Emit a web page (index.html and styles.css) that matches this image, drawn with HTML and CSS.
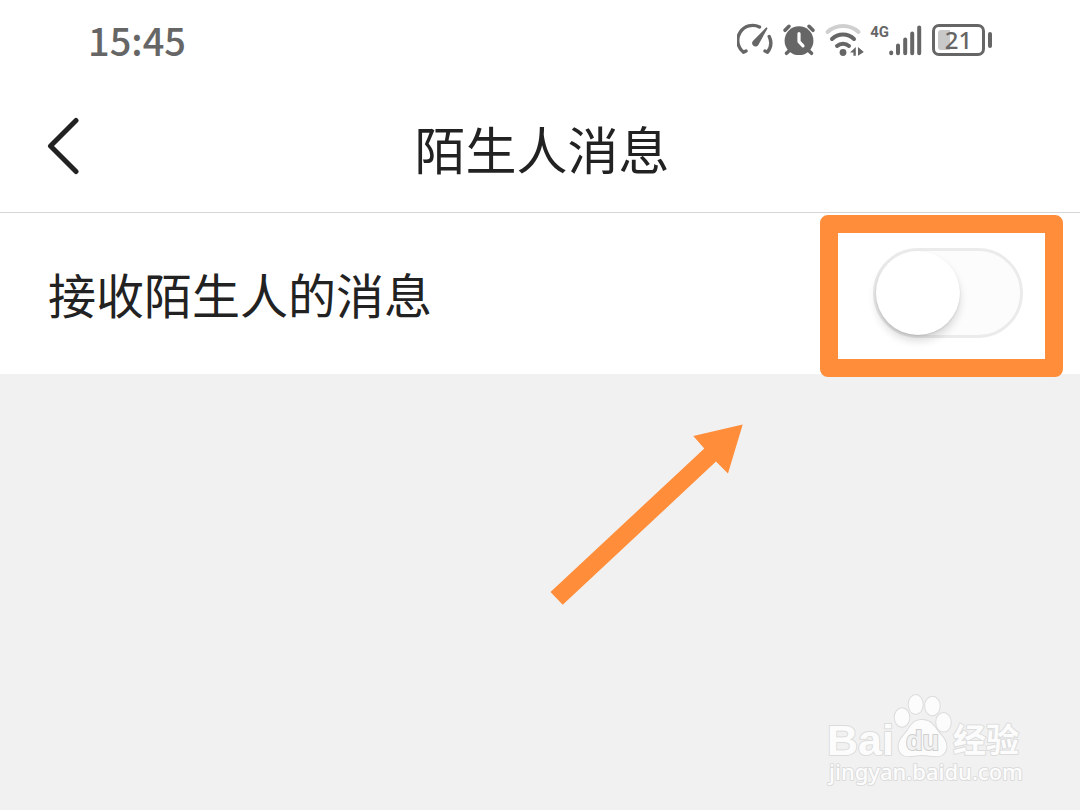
FILE: index.html
```
<!DOCTYPE html>
<html lang="zh-CN">
<head>
    <meta charset="UTF-8">
    <meta name="viewport" content="width=device-width, initial-scale=1.0">
    <title>陌生人消息</title>
    <link rel="stylesheet" href="styles.css">
</head>
<body>

    <div class="status-bar">
        <span class="time">15:45</span>
        <div class="status-icons">
            <!-- Speed gauge -->
            <svg class="icon" width="37" height="36" viewBox="0 0 37 36">
                <g fill="none" stroke="#666" stroke-width="3.4" stroke-linecap="round" stroke-linejoin="round">
                    <path d="M9 29L6.5 30.2A15 15 0 0 1 22.5 5"/>
                    <path d="M32.2 14.5A15 15 0 0 1 30.5 30.2L28 29"/>
                </g>
                <path d="M30.6 6.2L21.6 22.4A3.4 3.4 0 1 1 16.4 18.4L29.4 5.2Z" fill="#666"/>
            </svg>
            <!-- Alarm -->
            <svg class="icon" width="34" height="36" viewBox="0 0 34 36">
                <circle cx="17" cy="18.7" r="14.4" fill="#666"/>
                <g fill="none" stroke="#666" stroke-width="3.6" stroke-linecap="round">
                    <path d="M3 8.3L7 4.3M27 4.3L31 8.3M4.5 31.3L8 28M29.5 31.3L26 28"/>
                </g>
                <path d="M17 11.5V19.6L21 23.8" fill="none" stroke="#fff" stroke-width="3.2" stroke-linecap="round" stroke-linejoin="round"/>
            </svg>
            <!-- Wi-Fi -->
            <svg class="icon" width="40" height="36" viewBox="0 0 40 36">
                <g fill="none" stroke="#666" stroke-width="4" stroke-linecap="round">
                    <path d="M3.5 10A23 23 0 0 1 34.5 10" stroke="#cfcfcf"/>
                    <path d="M8 17A16 16 0 0 1 30 17"/>
                    <path d="M13 24A9 9 0 0 1 25 24"/>
                </g>
                <circle cx="19" cy="30.5" r="3.4" fill="#666"/>
                <path d="M26 30.5L31.8 25V33.8H29.4V30.5ZM34 25L39.8 30L34 33.8Z" fill="#666"/>
            </svg>
            <span class="network">4G</span>
            <!-- Signal -->
            <svg class="icon" width="33" height="36" viewBox="0 0 33 36">
                <g stroke="#666" stroke-width="4" stroke-linecap="round">
                    <path d="M2.2 30.6V31.3M9 23.6V31.3M16.2 17.6V31.3M23.2 11.4V31.3M30.2 5.6V31.3"/>
                </g>
            </svg>
            <div class="battery"><span class="battery-level"></span><span class="battery-text">21</span></div>
        </div>
    </div>

    <header class="nav">
        <button class="back" type="button" aria-label="返回">
            <svg width="32" height="58" viewBox="0 0 32 58">
                <path d="M29 3.5L3.5 29L29 54.5" fill="none" stroke="#222" stroke-width="5" stroke-linecap="round" stroke-linejoin="round"/>
            </svg>
        </button>
        <h1>陌生人消息</h1>
    </header>

    <main>
        <div class="setting">
            <label for="stranger">接收陌生人的消息</label>
            <div class="toggle-box">
                <input type="checkbox" id="stranger" class="toggle">
                <span class="highlight"></span>
            </div>
        </div>

        <div class="content">
            <svg class="arrow" width="194" height="182" viewBox="0 0 194 182">
                <path d="M0.5 168L12.7 180.8L166 37.6L178 49.6L192.7 0.5L143.3 12L154.3 24.5Z" fill="#ff8d3a"/>
            </svg>

            <svg class="watermark" width="210" height="110" viewBox="0 0 210 110">
                <g class="outlined">
                    <text class="brand" x="7" y="70">Bai</text>
                    <ellipse cx="82" cy="32.5" rx="7.3" ry="9.3"/>
                    <ellipse cx="95.7" cy="19.5" rx="7" ry="9.5"/>
                    <ellipse cx="112.4" cy="21" rx="7.3" ry="9.3"/>
                    <ellipse cx="123.5" cy="37.3" rx="7.3" ry="9.3"/>
                    <path d="M102 35C113 35 115 44 121 50C128 57 128 66 122 70C117 73 110 70 102 70C94 70 88 73 83 70C77 66 77 57 84 50C90 44 91 35 102 35Z"/>
                    <text class="brand-cn" x="133" y="67">经验</text>
                    <text class="url" x="9" y="95">jingyan.baidu.com</text>
                </g>
                <text class="brand-du" x="86" y="65">du</text>
            </svg>
        </div>
    </main>

</body>
</html>
```
FILE: styles.css
```
* {
    box-sizing: border-box;
}
body {
    margin: 0;
    min-height: 100vh;
    display: flex;
    flex-direction: column;
    background-color: #fff;
    color: #222;
    font-family: "Noto Sans CJK SC", sans-serif;
}
.status-bar {
    display: flex;
    justify-content: space-between;
    align-items: center;
    height: 84px;
    padding: 0 88px;
    color: #666;
}
.time {
    padding-bottom: 4px;
    font-size: 38px;
    font-weight: 500;
    line-height: 76px;
}
.status-icons {
    display: flex;
    align-items: center;
    gap: 8px;
    padding-bottom: 4px;
}
.icon {
    display: block;
}
.network {
    align-self: flex-start;
    margin: 0 -8px 0 -2px;
    font-family: Roboto, sans-serif;
    font-size: 15px;
    font-weight: 700;
    line-height: 20px;
}
.battery {
    position: relative;
    width: 53px;
    height: 32px;
    margin: 0 7px 0 2px;
    border: 3px solid #666;
    border-radius: 7px;
    text-align: center;
}
.battery::after {
    content: "";
    position: absolute;
    top: 5px;
    right: -10px;
    width: 4px;
    height: 16px;
    border-radius: 2px;
    background-color: #666;
}
.battery-level {
    position: absolute;
    top: 3px;
    left: 3px;
    width: 12px;
    height: 20px;
    border-radius: 3px 0 0 3px;
    background-color: #c8c8c8;
}
.battery-text {
    position: relative;
    display: block;
    font-family: "Noto Sans", sans-serif;
    font-size: 24px;
    font-weight: 500;
    line-height: 26px;
}

/* Title bar */
.nav {
    display: grid;
    grid-template-columns: 84px 1fr 80px;
    align-items: center;
    height: 129px;
    border-bottom: 1px solid #d6d6d6;
}
.back {
    padding: 0 0 4px 47px;
    border: none;
    background: none;
    cursor: pointer;
}
.back svg {
    display: block;
}
h1 {
    margin: 0;
    font-size: 51px;
    font-weight: 400;
    line-height: 72px;
    text-align: center;
}

main {
    flex: 1;
    display: flex;
    flex-direction: column;
}
.setting {
    display: flex;
    justify-content: space-between;
    align-items: center;
    height: 161px;
    padding: 0 57px 2px 48px;
}
.setting label {
    font-size: 48px;
    line-height: 72px;
}
.toggle-box {
    position: relative;
    z-index: 1;
}
.toggle {
    appearance: none;
    display: block;
    width: 150px;
    height: 90px;
    margin: 0;
    border: 3px solid #ebebeb;
    border-radius: 45px;
    background-color: #fcfcfc;
    cursor: pointer;
}
.toggle::before {
    content: "";
    display: block;
    width: 84px;
    height: 84px;
    border-radius: 50%;
    background-color: #fff;
    box-shadow: 0 6px 8px rgba(0, 0, 0, 0.14), 0 1px 2px rgba(0, 0, 0, 0.12);
}
.toggle:checked::before {
    margin-left: 60px;
}
.highlight {
    position: absolute;
    top: -33px;
    right: -40px;
    bottom: -39px;
    left: -53px;
    border: 18px solid #ff8d3a;
    border-radius: 8px;
    pointer-events: none;
}

.content {
    position: relative;
    flex: 1;
    min-height: 430px;
    background-color: #f1f1f1;
}
.arrow {
    position: absolute;
    top: 50px;
    left: 550px;
}
.watermark {
    position: absolute;
    right: 50px;
    bottom: 15px;
}
.outlined {
    fill: #fcfcfc;
    stroke: #dcdcdc;
    stroke-width: 2px;
    stroke-linejoin: round;
    paint-order: stroke;
}
.brand {
    font-family: "Liberation Sans", sans-serif;
    font-size: 43px;
    font-weight: 700;
}
.brand-cn {
    font-size: 33px;
    font-weight: 700;
}
.brand-du {
    fill: #f1f1f1;
    stroke: #cfcfcf;
    stroke-width: 2px;
    paint-order: stroke;
    font-family: "Liberation Sans", sans-serif;
    font-size: 27px;
    font-weight: 700;
}
.url {
    font-family: "Noto Sans", sans-serif;
    font-size: 22px;
    font-weight: 500;
}
```
